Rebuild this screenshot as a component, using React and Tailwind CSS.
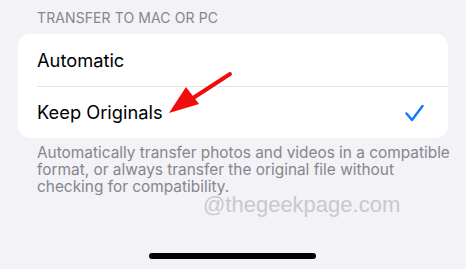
export default function App() {
  return (
    <div className="relative w-[466px] h-[269px] overflow-hidden bg-[#f2f2f7] font-['Inter',sans-serif]">
      <p className="pl-[37px] pt-[9px] text-[14px] leading-[17px] text-[#86868b] uppercase tracking-[0.1px]">
        Transfer to Mac or PC
      </p>
      <div className="mx-[18px] mt-[8px] bg-white rounded-[12px]">
        <div className="h-[52px] flex items-center pl-[19px] pt-[1px] text-[18.3px] text-black">Automatic</div>
        <div className="ml-[19px] h-px bg-[#e2e2e6]" />
        <div className="h-[51px] flex items-center justify-between pl-[19px] pr-[24px] text-[18.3px] text-black">
          <span>Keep Originals</span>
          <svg width="19" height="18" viewBox="0 0 19 18" fill="none">
            <path d="M1.5 9.5 L7 16 L17.5 2" stroke="#0a7aff" strokeWidth="2.4" strokeLinecap="round" strokeLinejoin="round" />
          </svg>
        </div>
      </div>
      <p className="pl-[37px] pt-[6px] text-[15.4px] leading-[17px] whitespace-nowrap text-[#86868b]">
        Automatically transfer photos and videos in a compatible
        <br />
        format, or always transfer the original file without
        <br />
        checking for compatibility.
      </p>
      <div className="absolute left-[203px] top-[192px] text-[22px] leading-[25px] text-[#c9c9cd] font-['Liberation_Sans',sans-serif]">
        @thegeekpage.com
      </div>
      <svg className="absolute left-0 top-0" width="466" height="269" viewBox="0 0 466 269">
        <line x1="230" y1="74" x2="190" y2="100" stroke="#f20d0d" strokeWidth="4" strokeLinecap="round" />
        <polygon points="169,113 186,87 199,104" fill="#f20d0d" />
      </svg>
      <div className="absolute left-[149px] top-[253px] w-[167px] h-[6px] rounded-full bg-black" />
    </div>
  );
}
